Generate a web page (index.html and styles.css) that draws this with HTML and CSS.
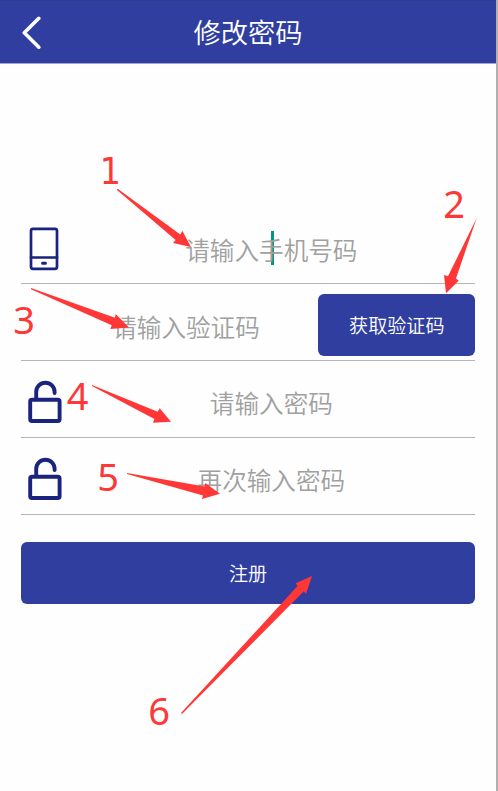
FILE: index.html
```html
<!DOCTYPE html>
<html lang="zh-CN">
<head>
<meta charset="utf-8">
<title>修改密码</title>
<link rel="stylesheet" href="styles.css">
</head>
<body>
<main class="screen">
  <header class="bar">
    <svg class="back" viewBox="0 0 20 36"><path d="M16.8 3.3 2.3 17.8l14.5 14.4"/></svg>
    <h1 class="title">修改密码</h1>
  </header>
  <form class="form">
    <div class="row">
      <svg class="icon" viewBox="0 0 36 44"><rect class="thin" x="3" y="1.8" width="26" height="40" rx="2"/><path class="thin" d="M3 30.5h26"/><rect class="dot" x="13.2" y="34.8" width="5.6" height="3" rx="1.2"/></svg>
      <div class="field">请输入手机号码<i class="caret"></i></div>
    </div>
    <div class="row">
      <div class="field code">请输入验证码</div>
      <button class="btn send" type="button">获取验证码</button>
    </div>
    <div class="row">
      <svg class="icon" viewBox="0 0 36 44"><rect x="2.2" y="19.8" width="29.4" height="21.2" rx="1.8"/><path d="M8.2 19V11.9a9.2 9.2 0 0 1 18.4 0v1.1"/></svg>
      <div class="field">请输入密码</div>
    </div>
    <div class="row">
      <svg class="icon" viewBox="0 0 36 44"><rect x="2.2" y="19.8" width="29.4" height="21.2" rx="1.8"/><path d="M8.2 19V11.9a9.2 9.2 0 0 1 18.4 0v1.1"/></svg>
      <div class="field">再次输入密码</div>
    </div>
    <button class="btn submit" type="button">注册</button>
  </form>
  <svg class="notes" viewBox="0 0 498 791">
    <path d="M117 189 118 189 180.3 234.5 182.3 230.7 191 247 173 243 175.6 240 117 190Z"/>
    <path d="M476.7 218 456 278.5 458.7 280.7 446 293.3 444 275 448 276.3Z"/>
    <path d="M31 288 115 317.8 115.7 314 129 327.5 110.3 329 111.7 325.3 31 289.2Z"/>
    <path d="M92 385 157.7 411.7 159.7 408.3 171 421.7 153 422.7 154.4 419 92 386Z"/>
    <path d="M127 473 204.6 486.4 205.3 483 220 493.7 202 499 203 495.6 127 474Z"/>
    <path d="M181 713 297.5 586 295.7 583.3 312 576 306 593.7 303.8 591.3 182 714Z"/>
    <text class="one" x="110.3" y="184">1</text>
    <text x="454" y="218">2</text>
    <text x="24" y="333.5">3</text>
    <text x="77.5" y="410">4</text>
    <text x="108" y="491">5</text>
    <text x="159" y="724.5">6</text>
  </svg>
</main>
</body>
</html>
```
FILE: styles.css
```css
* { box-sizing: border-box; }

body {
  margin: 0;
  background: #fefefe;
  font-family: "Noto Sans CJK SC", sans-serif;
  font-weight: 350;
}

.screen {
  position: relative;
  width: 498px;
  height: 791px;
  border-right: 2px solid #b0b0b0;
  overflow: hidden;
}

.bar {
  display: grid;
  grid-template-columns: 44px 1fr 44px;
  align-items: center;
  height: 64px;
  background: #303f9f;
  border-top: 1px solid #2c3a90;
  border-bottom: 1px solid #a0a7d6;
}

.back {
  width: 20px;
  height: 36px;
  margin: 1px 0 0 22px;
  fill: none;
  stroke: #fff;
  stroke-width: 3.6;
  stroke-linecap: round;
  stroke-linejoin: round;
}

.title {
  margin: 0;
  padding-bottom: 2px;
  color: #fff;
  font-size: 27.3px;
  font-weight: inherit;
  line-height: 40px;
  text-align: center;
}

.form {
  display: flex;
  flex-direction: column;
  margin: 143.6px 20.7px 0;
}

.row {
  display: flex;
  align-items: center;
  height: 76.75px;
  padding-top: 5px;
  border-bottom: 1px solid #b5b5b5;
}

.icon {
  flex: none;
  width: 36px;
  height: 44px;
  margin: 2px 0 0 7.7px;
  fill: none;
  stroke: #1a237e;
  stroke-width: 3.9;
  stroke-linecap: round;
}

.icon .thin { stroke-width: 2.7; }
.icon .dot { fill: #1a237e; stroke: none; }

.field {
  position: relative;
  flex: 1;
  padding: 2px 0 0 3px;
  color: #a0a0a0;
  font-size: 24.6px;
  line-height: 36px;
  text-align: center;
}

.code { padding-left: 33px; }

.caret {
  position: absolute;
  z-index: -1;
  left: calc(50% + 1px);
  top: 2px;
  width: 3px;
  height: 34px;
  background: #009688;
}

.btn {
  border: 0;
  border-radius: 6px;
  padding: 1px 0 0;
  background: #303f9f;
  color: #fff;
  font: inherit;
  font-size: 19.1px;
  line-height: 28px;
}

.send {
  width: 157px;
  height: 62px;
}

.submit {
  height: 62px;
  margin-top: 27.3px;
}

.notes {
  position: absolute;
  inset: 0;
  width: 498px;
  height: 791px;
  fill: #ff3737;
  font-family: "Noto Sans", sans-serif;
  font-size: 38px;
  font-weight: 400;
  text-anchor: middle;
}

.notes .one {
  font-family: "DejaVu Sans Condensed", "DejaVu Sans", sans-serif;
  font-size: 37px;
  font-stretch: condensed;
}
```
